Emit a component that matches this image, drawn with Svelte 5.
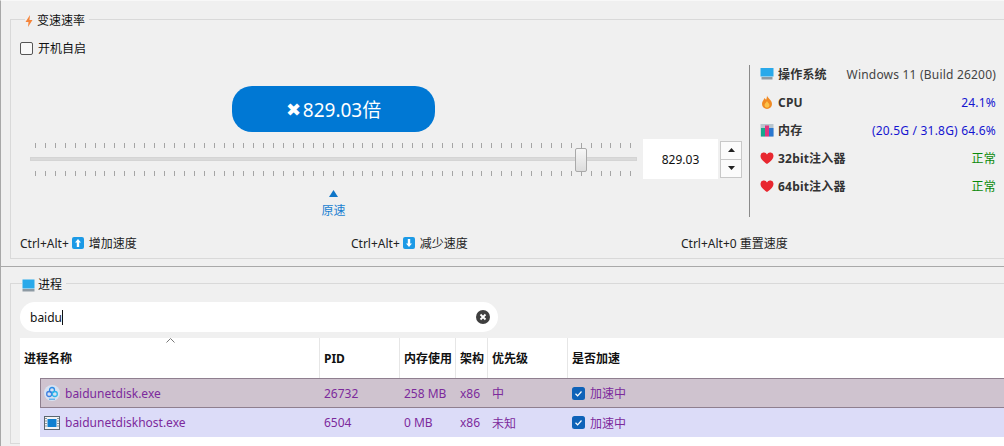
<script>
  const ticks = Array.from({ length: 61 }, (_, i) => i)
  const stats = [
    { icon: 'monitor', label: '操作系统', value: 'Windows 11 (Build 26200)', tone: 'os' },
    { icon: 'flame', label: 'CPU', value: '24.1%', tone: 'blue' },
    { icon: 'bars', label: '内存', value: '(20.5G / 31.8G) 64.6%', tone: 'blue' },
    { icon: 'heart', label: '32bit注入器', value: '正常', tone: 'green' },
    { icon: 'heart', label: '64bit注入器', value: '正常', tone: 'green' }
  ]
  const processes = [
    { name: 'baidunetdisk.exe', pid: '26732', mem: '258 MB', arch: 'x86', prio: '中', icon: 'baidu', cls: 'sel' },
    { name: 'baidunetdiskhost.exe', pid: '6504', mem: '0 MB', arch: 'x86', prio: '未知', icon: 'exe', cls: 'alt' }
  ]
</script>

{#snippet statIcon(kind)}
  <svg class="stat-icon" viewBox="0 0 14 14" width="14" height="14">
    {#if kind === 'monitor'}
      <rect x="0.5" y="1" width="13" height="8.5" fill="#29a9ea" />
      <rect x="1.5" y="10" width="11" height="2.5" fill="#8d9aa3" />
    {:else if kind === 'flame'}
      <path d="M7 0.5C7.5 3 12 5 12 9a5 5 0 0 1-10 0C2 6 4 5 4.5 3 5.5 4 6 4.5 6 5 6.500 4 7 2 7 0.5Z" fill="#f08a24" />
      <path d="M7 6c.4 1.500 2.500 2.500 2.500 4.200a2.500 2.500 0 0 1-5 0C4.500 8.500 6.500 7.500 7 6Z" fill="#fcc24a" />
    {:else if kind === 'bars'}
      <rect x="0.5" y="1" width="13" height="12.5" fill="#b9c6cf" />
      <rect x="1" y="5" width="4" height="8.500" fill="#16a78e" />
      <rect x="5" y="2.500" width="4" height="11" fill="#e0357e" />
      <rect x="9" y="5" width="4.500" height="8.500" fill="#2a78cf" />
    {:else}
      <path d="M7 13C3 10 .5 8 .5 5A3.400 3.400 0 0 1 7 3.500 3.400 3.400 0 0 1 13.500 5C13.500 8 11 10 7 13Z" fill="#e8272f" />
    {/if}
  </svg>
{/snippet}

{#snippet keyIcon(up)}
  <svg class="key" viewBox="0 0 12 12" width="12" height="12">
    <rect width="12" height="12" rx="2" fill="#1c9ae6" />
    {#if up}
      <path d="M6 2 9 5.500H7.200V10H4.800V5.500H3Z" fill="#fff" />
    {:else}
      <path d="M6 10 9 6.500H7.200V2H4.800V6.500H3Z" fill="#fff" />
    {/if}
  </svg>
{/snippet}

<div class="page">
  <fieldset class="group speed">
    <legend>
      <svg viewBox="0 0 8 12" width="8" height="12"><path d="M5 0 0.500 7H3.500L3 12 7.500 5H4.500Z" fill="#f5853b" /></svg>
      <span>变速速率</span>
    </legend>

    <label class="autostart"><span class="box"></span>开机自启</label>

    <div class="speed-main">
      <div class="controls">
        <div class="pill"><span class="times">✖</span>829.03倍</div>

        <div class="slider">
          <div class="ticks">{#each ticks as t (t)}<i></i>{/each}</div>
          <div class="track"></div>
          <div class="ticks">{#each ticks as t (t)}<i></i>{/each}</div>
          <div class="thumb"></div>
        </div>

        <div class="spin">
          <div class="spin-value">829.03</div>
          <div class="spin-btns">
            <button aria-label="up"><svg viewBox="0 0 7 4" width="7" height="4"><path d="M3.500 0 7 4H0Z" /></svg></button>
            <button aria-label="down"><svg viewBox="0 0 7 4" width="7" height="4"><path d="M0 0H7L3.500 4Z" /></svg></button>
          </div>
        </div>

        <div class="origin">
          <svg viewBox="0 0 9 7" width="9" height="7"><path d="M4.500 0 9 7H0Z" fill="#0f76c8" /></svg>
          <span>原速</span>
        </div>
      </div>

      <div class="stats">
        {#each stats as s}
          <div class="stat">
            {@render statIcon(s.icon)}
            <span class="stat-label">{s.label}</span>
            <span class="stat-value {s.tone}">{s.value}</span>
          </div>
        {/each}
      </div>
    </div>

    <div class="hotkeys">
      <div>Ctrl+Alt+ {@render keyIcon(true)} 增加速度</div>
      <div>Ctrl+Alt+ {@render keyIcon(false)} 减少速度</div>
      <div>Ctrl+Alt+0 重置速度</div>
    </div>
  </fieldset>

  <div class="splitter"></div>

  <fieldset class="group procs">
    <legend>
      <svg viewBox="0 0 13 13" width="13" height="13">
        <rect x="0.500" y="0.500" width="12" height="9" fill="#29a9ea" />
        <rect x="0.500" y="10" width="12" height="2.500" fill="#8d9aa3" />
      </svg>
      <span>进程</span>
    </legend>

    <div class="search">
      <span class="query">baidu</span><span class="caret"></span>
      <svg class="clear" viewBox="0 0 14 14" width="14" height="14">
        <circle cx="7" cy="7" r="7" fill="#3f3f3f" />
        <path d="M4.500 4.500 9.500 9.500M9.500 4.500 4.500 9.500" stroke="#fff" stroke-width="1.800" />
      </svg>
    </div>

    <div class="table">
      <div class="thead">
        <div class="th first">进程名称
          <svg class="sort" viewBox="0 0 9 5" width="9" height="5"><path d="M.5 4.500 4.500 .5 8.500 4.500" fill="none" stroke="#777" /></svg>
        </div>
        <div class="th">PID</div>
        <div class="th">内存使用</div>
        <div class="th">架构</div>
        <div class="th">优先级</div>
        <div class="th last">是否加速</div>
      </div>
      {#each processes as p}
        <div class="row {p.cls}">
          <div class="name">
            {#if p.icon === 'baidu'}
              <svg viewBox="0 0 16 16" width="16" height="16">
                <circle cx="8" cy="8" r="8" fill="#d6e2f2" />
                <g fill="none" stroke-width="1.300">
                  <circle cx="8" cy="5" r="2.500" stroke="#2c8ce6" />
                  <circle cx="5.200" cy="9" r="2.500" stroke="#3f7fe0" />
                  <circle cx="10.800" cy="9" r="2.500" stroke="#2db5ea" />
                </g>
                <path d="M5 14.200H11" stroke="#3aa0ea" stroke-width="1" />
              </svg>
            {:else}
              <svg viewBox="0 0 16 14" width="16" height="14">
                <rect x="0.500" y="0.500" width="15" height="13" fill="#f4f4f4" stroke="#5b6670" />
                <rect x="3.500" y="3" width="9" height="8" fill="#0f7fd0" />
                <path d="M1 2.500H3M1 5H3M1 7.500H3M1 10H3M13 2.500H15M13 5H15M13 7.500H15M13 10H15" stroke="#8a949c" stroke-width="1" />
              </svg>
            {/if}
            <span>{p.name}</span>
          </div>
          <div class="cell">{p.pid}</div>
          <div class="cell">{p.mem}</div>
          <div class="cell">{p.arch}</div>
          <div class="cell">{p.prio}</div>
          <div class="cell accel">
            <svg viewBox="0 0 13 13" width="13" height="13">
              <rect width="13" height="13" rx="2.500" fill="#0f62b8" />
              <path d="M3.500 6.800 5.600 8.800 9.500 4.500" fill="none" stroke="#fff" stroke-width="1.200" />
            </svg>
            <span>加速中</span>
          </div>
        </div>
      {/each}
    </div>
  </fieldset>
</div>

<style>
  :global(body) {
    margin: 0;
    background: #f0f0f0;
  }
  .page {
    width: 1004px;
    height: 446px;
    box-sizing: border-box;
    overflow: hidden;
    background: #f0f0f0;
    border-left: 1px solid #a8a8a8;
    border-top: 1px solid #f8f8f8;
    padding-left: 9px;
    font-family: "Noto Sans", "Noto Sans CJK SC", sans-serif;
    font-size: 12px;
    color: #222;
  }
  svg {
    display: block;
    flex: none;
  }
  .group {
    margin: 0;
    padding: 0 0 0 9px;
    border: 1px solid #d9d9d9;
    border-right: none;
    min-width: 0;
  }
  legend {
    display: flex;
    align-items: center;
    gap: 4px;
    margin-left: 5px;
    padding: 4px 4px 0 0;
    font-size: 12px;
    line-height: 18px;
    color: #111;
  }
  .speed {
    height: 251px;
    margin-top: 7px;
    box-sizing: border-box;
  }
  .autostart {
    display: flex;
    align-items: center;
    gap: 5px;
    height: 18px;
    margin-top: 9px;
    color: #111;
  }
  .box {
    width: 11px;
    height: 11px;
    border: 1px solid #555;
    border-radius: 2px;
    background: #f8f8f8;
  }
  .speed-main {
    display: flex;
    margin-top: 8px;
  }
  .controls {
    display: grid;
    grid-template-columns: 607px auto;
    grid-template-rows: 46px auto auto;
    column-gap: 6px;
    align-items: center;
    justify-items: center;
    justify-content: start;
    align-content: start;
    width: 729px;
    box-sizing: border-box;
    padding: 21px 0 0 10px;
  }
  .pill {
    width: 203px;
    height: 46px;
    border-radius: 20px;
    background: #0078d4;
    color: #fff;
    font-size: 19px;
    display: flex;
    align-items: center;
    justify-content: center;
  }
  .times {
    font-size: 18px;
    margin-right: 2px;
  }
  .slider {
    position: relative;
    grid-row: 2;
    grid-column: 1;
    width: 607px;
    height: 33px;
    margin-top: 7px;
    display: flex;
    flex-direction: column;
    justify-content: space-between;
  }
  .ticks {
    display: flex;
    justify-content: space-between;
    height: 5px;
    margin: 0 5px;
  }
  .ticks i {
    width: 1px;
    background: #a5a5a5;
  }
  .track {
    height: 4px;
    background: #dadada;
    border: 1px solid #d4d4d4;
    box-sizing: border-box;
  }
  .thumb {
    position: absolute;
    left: 545px;
    top: 5px;
    width: 10px;
    height: 22px;
    border: 1px solid #a9a9a9;
    border-radius: 2px;
    background: linear-gradient(#f7f7f7, #dcdcdc);
  }
  .spin {
    grid-row: 2;
    grid-column: 2;
    display: flex;
    align-items: center;
    gap: 2px;
    margin-top: 7px;
  }
  .spin-value {
    width: 75px;
    height: 40px;
    background: #fff;
    display: flex;
    align-items: center;
    justify-content: center;
    color: #111;
  }
  .spin-btns {
    display: flex;
    flex-direction: column;
    width: 22px;
    height: 37px;
  }
  .spin-btns button {
    flex: 1;
    padding: 0;
    margin: 0;
    background: #fbfbfb;
    border: 1px solid #c8c8c8;
    display: flex;
    align-items: center;
    justify-content: center;
  }
  .spin-btns button + button {
    border-top: none;
  }
  .spin-btns path {
    fill: #222;
  }
  .origin {
    grid-row: 3;
    grid-column: 1;
    display: flex;
    flex-direction: column;
    align-items: center;
    gap: 4px;
    margin-top: 11px;
    color: #1a7fd0;
  }
  .stats {
    width: 247px;
    height: 152px;
    box-sizing: border-box;
    border-left: 1px solid #8a8a8a;
    padding: 0 0 0 10px;
  }
  .stat {
    display: flex;
    align-items: center;
    gap: 4px;
    height: 28px;
    width: 236px;
  }
  .stat:first-child {
    margin-top: -5px;
  }
  .stat-label {
    font-weight: 700;
    color: #333;
    flex: 1;
    letter-spacing: 0.2px;
  }
  .stat-value {
    letter-spacing: 0.2px;
  }
  .stat-value.os { color: #444; }
  .stat-value.blue { color: #1515d0; }
  .stat-value.green { color: #0a8a0a; }
  .hotkeys {
    display: grid;
    grid-template-columns: 331px 330px 1fr;
    margin-top: 15px;
    height: 18px;
    color: #222;
  }
  .hotkeys div {
    display: flex;
    align-items: center;
    gap: 3px;
    white-space: nowrap;
  }
  .key {
    margin-right: 2px;
  }
  .splitter {
    height: 0;
    border-top: 1px solid #a9a9a9;
    margin: 7px 0 0 -9px;
  }
  .procs {
    margin-top: 5px;
    height: 172px;
    box-sizing: border-box;
  }
  .procs legend {
    gap: 3px;
    margin-left: 2px;
  }
  .search {
    display: flex;
    align-items: center;
    width: 478px;
    height: 30px;
    box-sizing: border-box;
    margin-top: 8px;
    padding: 0 8px 0 10px;
    background: #fff;
    border-radius: 15px;
    color: #111;
  }
  .caret {
    width: 1px;
    height: 15px;
    background: #111;
  }
  .clear {
    margin-left: auto;
  }
  .table {
    margin-top: 6px;
    margin-right: -4px;
    background: #fff;
    height: 120px;
  }
  .thead, .row {
    display: grid;
    grid-template-columns: 300px 80px 56px 32px 80px 1fr;
  }
  .thead {
    height: 40px;
  }
  .th {
    position: relative;
    display: flex;
    align-items: center;
    padding-left: 4px;
    box-sizing: border-box;
    font-weight: 700;
    color: #111;
    border-right: 1px solid #e6e6e6;
  }
  .th.last {
    border-right: none;
  }
  .sort {
    position: absolute;
    left: 146px;
    top: 0;
  }
  .row {
    height: 29px;
    margin-left: 20px;
    grid-template-columns: 280px 80px 56px 32px 80px 1fr;
    align-items: center;
    color: #7c2a9c;
    box-sizing: border-box;
    margin-bottom: 1px;
  }
  .row.sel {
    background: #cfc3cf;
    outline: 1px solid #8f7f8f;
    outline-offset: -1px;
    height: 30px;
    margin-bottom: 0;
  }
  .row.alt {
    background: #dcdcf8;
  }
  .name {
    display: flex;
    align-items: center;
    gap: 5px;
    padding-left: 4px;
  }
  .cell {
    padding-left: 4px;
  }
  .accel {
    display: flex;
    align-items: center;
    gap: 5px;
  }
</style>
